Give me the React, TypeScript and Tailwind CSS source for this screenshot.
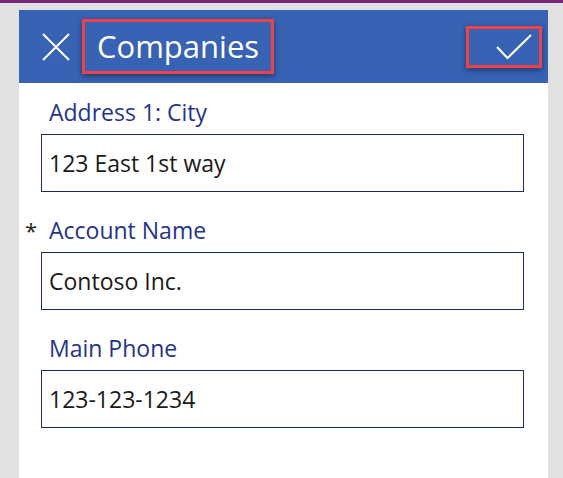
interface FieldProps {
  label: string;
  value: string;
  required?: boolean;
}

function Field({ label, value, required }: FieldProps) {
  return (
    <div className="flex flex-col">
      <div className="flex h-[30px] items-center leading-[30px]">
        <span className="w-[30px] pl-[6px] text-[22px] text-[#1f1f1f]">{required ? '*' : ''}</span>
        <span className="text-[23px] text-[#24348a]">{label}</span>
      </div>
      <div className="ml-[22px] mr-[24px] mt-[7px] flex h-[58px] items-center border border-[#1f2a6e] pl-[7px]">
        <span className="text-[23px] text-[#1a1a1a]">{value}</span>
      </div>
    </div>
  );
}

export default function App() {
  return (
    <div
      className="flex h-[478px] w-[563px] flex-col overflow-hidden bg-[#e1e1e1]"
      style={{ fontFamily: '"Open Sans", "Noto Sans", sans-serif' }}
    >
      {/* App bar */}
      <div className="h-[3px] shrink-0 bg-[#742774]" />

      {/* Screen */}
      <div className="ml-[19px] mt-[7px] flex w-[529px] flex-1 flex-col bg-white">
        <div className="flex h-[73px] shrink-0 items-center bg-[#3862b4] pl-[23px] pr-[6px]">
          <svg width="28" height="28" viewBox="0 0 28 28" className="shrink-0">
            <path d="M1 1 L27 27 M27 1 L1 27" stroke="white" strokeWidth="2" fill="none" />
          </svg>
          <div className="ml-[12px] flex h-[55px] w-[192px] items-center border-[3px] border-[#ef4146] pl-[12px] shadow-[0_2px_6px_rgba(0,0,0,0.45)]">
            <span className="text-[31px] leading-none text-white">Companies</span>
          </div>
          <div className="ml-auto flex h-[42px] w-[76px] items-center border-[3px] border-[#ef4146] pl-[27px] shadow-[0_2px_6px_rgba(0,0,0,0.45)]">
            <svg width="36" height="26" viewBox="0 0 36 26">
              <path d="M1 13 L11.5 24 L35 1" stroke="white" strokeWidth="2" fill="none" />
            </svg>
          </div>
        </div>

        <div className="flex flex-col gap-[23px] pt-[14px]">
          <Field label="Address 1: City" value="123 East 1st way" />
          <Field label="Account Name" value="Contoso Inc." required />
          <Field label="Main Phone" value="123-123-1234" />
        </div>
      </div>
    </div>
  );
}
